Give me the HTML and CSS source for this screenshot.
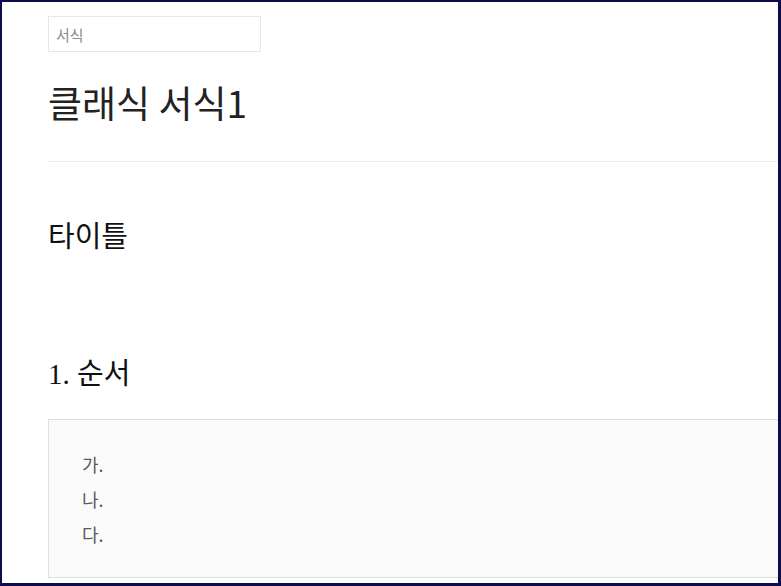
FILE: index.html
```html
<!DOCTYPE html>
<html>

<head>
    <meta charset="utf-8">
    <link rel="stylesheet" href="styles.css">
</head>

<body>
    <div id="frame">
        <div id="page">
            <input type="text" class="search" placeholder="서식" />

            <h1 class="docTitle">클래식 서식1</h1>
            <hr class="line">

            <h2 class="title">타이틀</h2>

            <h2 class="section">1. 순서</h2>

            <div class="box">
                <p>가.</p>
                <p>나.</p>
                <p>다.</p>
            </div>
        </div>
    </div>
</body>

</html>
```

FILE: styles.css
```css
body {
    margin: 0;
    overflow: hidden;
}

#frame {
    box-sizing: border-box;
    width: 781px;
    height: 586px;
    border-style: solid;
    border-color: #0b0b50;
    border-width: 2px 3px 3px 2px;
    background-color: white;
    overflow: hidden;
    padding: 14px 0 0 46px;
}

#page {
    width: 780px;
}

.search {
    box-sizing: border-box;
    display: block;
    width: 213px;
    height: 36px;
    margin: 0;
    border: 1px solid #e6e6e6;
    padding: 0 7px;
    font-family: "Noto Sans CJK KR", sans-serif;
    font-size: 15px;
    outline: none;
}

.search::placeholder {
    color: #8a8a8a;
}

.docTitle {
    margin: 22px 0 0 0;
    font-family: "Noto Sans CJK KR", sans-serif;
    font-weight: 400;
    font-size: 37px;
    line-height: 56px;
    color: #222;
}

.line {
    margin: 31px 0 0 0;
    border: none;
    border-top: 1px solid #eeeeee;
}

.title {
    margin: 55px 0 0 0;
    font-family: "Liberation Serif", "Noto Sans CJK KR", serif;
    font-weight: normal;
    font-size: 29px;
    line-height: 40px;
    color: #111;
}

.section {
    margin: 97px 0 0 0;
    font-family: "Liberation Serif", "Noto Sans CJK KR", serif;
    font-weight: normal;
    font-size: 29px;
    line-height: 40px;
    color: #111;
}

.box {
    margin-top: 25px;
    border: 1px solid #dddddd;
    background-color: #fafafa;
    padding: 27px 33px 25px 33px;
    height: 159px;
    box-sizing: border-box;
}

.box p {
    margin: 0;
    font-family: "Noto Sans CJK KR", sans-serif;
    font-size: 18px;
    line-height: 35px;
    color: #5a5a5a;
}
```
